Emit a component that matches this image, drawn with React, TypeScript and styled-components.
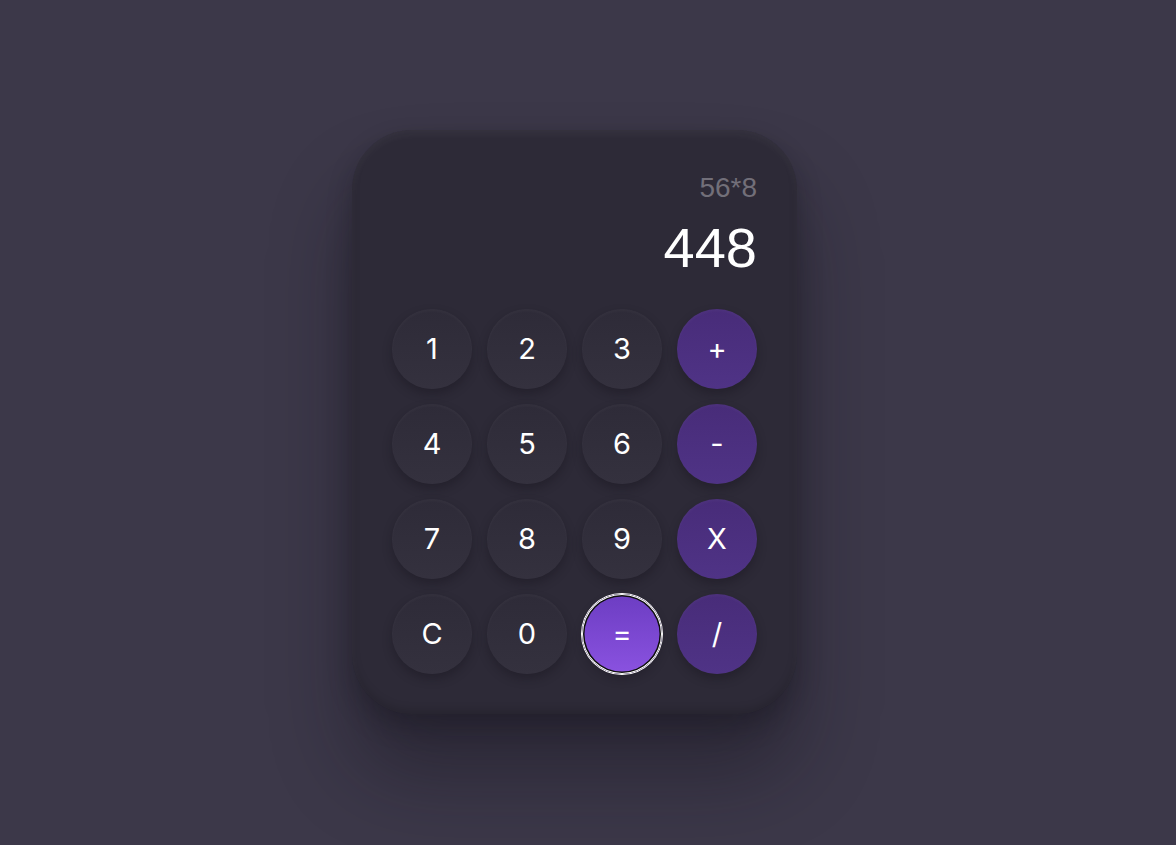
import React from "react";
import styled, { createGlobalStyle, css } from "styled-components";

const GlobalStyle = createGlobalStyle`
  * { box-sizing: border-box; }
  html, body { margin: 0; padding: 0; }
  body {
    background: #3c3849;
    font-family: "Liberation Sans", Arial, sans-serif;
  }
`;

const Page = styled.main`
  min-height: 845px;
  display: flex;
  align-items: center;
  justify-content: center;
  padding-right: 27px;
  padding-bottom: 2px;
`;

const Card = styled.section`
  width: 445px;
  padding: 40px;
  border-radius: 60px;
  background: #2d2a37;
  box-shadow:
    0 60px 80px rgba(18, 16, 24, 0.4),
    0 12px 24px rgba(18, 16, 24, 0.3),
    inset 0 4px 8px rgba(255, 255, 255, 0.05),
    inset 0 -4px 8px rgba(0, 0, 0, 0.15);
`;

const Display = styled.div`
  display: flex;
  flex-direction: column;
  align-items: flex-end;
  margin-bottom: 29px;
`;

const Expression = styled.div`
  font-family: "Liberation Sans", Arial, sans-serif;
  font-size: 28px;
  line-height: 36px;
  color: #726f79;
`;

const Result = styled.div`
  font-family: "Liberation Sans", Arial, sans-serif;
  font-size: 56px;
  line-height: 64px;
  margin-top: 10px;
  color: #ffffff;
`;

const Keypad = styled.div`
  display: grid;
  grid-template-columns: repeat(4, 80px);
  grid-auto-rows: 80px;
  gap: 15px;
`;

type Variant = "digit" | "op" | "equals";

const Key = styled.button<{ $variant: Variant }>`
  width: 80px;
  height: 80px;
  border-radius: 50%;
  border: none;
  padding: 0;
  display: flex;
  align-items: center;
  justify-content: center;
  font-family: Inter, "Open Sans", sans-serif;
  font-weight: 400;
  font-size: 29px;
  color: #ffffff;
  cursor: pointer;
  ${({ $variant }) =>
    $variant === "digit"
      ? css`
          background: linear-gradient(180deg, #2e2b38 0%, #34313e 100%);
          box-shadow:
            0 5px 10px rgba(20, 18, 26, 0.35),
            inset 0 2px 3px rgba(255, 255, 255, 0.03);
        `
      : $variant === "op"
      ? css`
          background: linear-gradient(180deg, #482c79 0%, #4f3386 100%);
          box-shadow:
            0 5px 10px rgba(20, 18, 26, 0.35),
            inset 0 2px 3px rgba(255, 255, 255, 0.03);
        `
      : css`
          background: linear-gradient(180deg, #6c3dc2 0%, #8a52e0 100%);
          box-shadow:
            0 0 0 1px #ffffff,
            inset 0 0 0 1px #ffffff,
            inset 0 0 0 2.5px #101010,
            0 5px 10px rgba(20, 18, 26, 0.3);
        `}
`;

const keys: { label: string; variant: Variant }[] = [
  { label: "1", variant: "digit" },
  { label: "2", variant: "digit" },
  { label: "3", variant: "digit" },
  { label: "+", variant: "op" },
  { label: "4", variant: "digit" },
  { label: "5", variant: "digit" },
  { label: "6", variant: "digit" },
  { label: "-", variant: "op" },
  { label: "7", variant: "digit" },
  { label: "8", variant: "digit" },
  { label: "9", variant: "digit" },
  { label: "X", variant: "op" },
  { label: "C", variant: "digit" },
  { label: "0", variant: "digit" },
  { label: "=", variant: "equals" },
  { label: "/", variant: "op" },
];

export default function App() {
  return (
    <>
      <GlobalStyle />
      <Page>
        <Card>
          <Display>
            <Expression>56*8</Expression>
            <Result>448</Result>
          </Display>
          <Keypad>
            {keys.map((k) => (
              <Key key={k.label} $variant={k.variant}>
                {k.label}
              </Key>
            ))}
          </Keypad>
        </Card>
      </Page>
    </>
  );
}
